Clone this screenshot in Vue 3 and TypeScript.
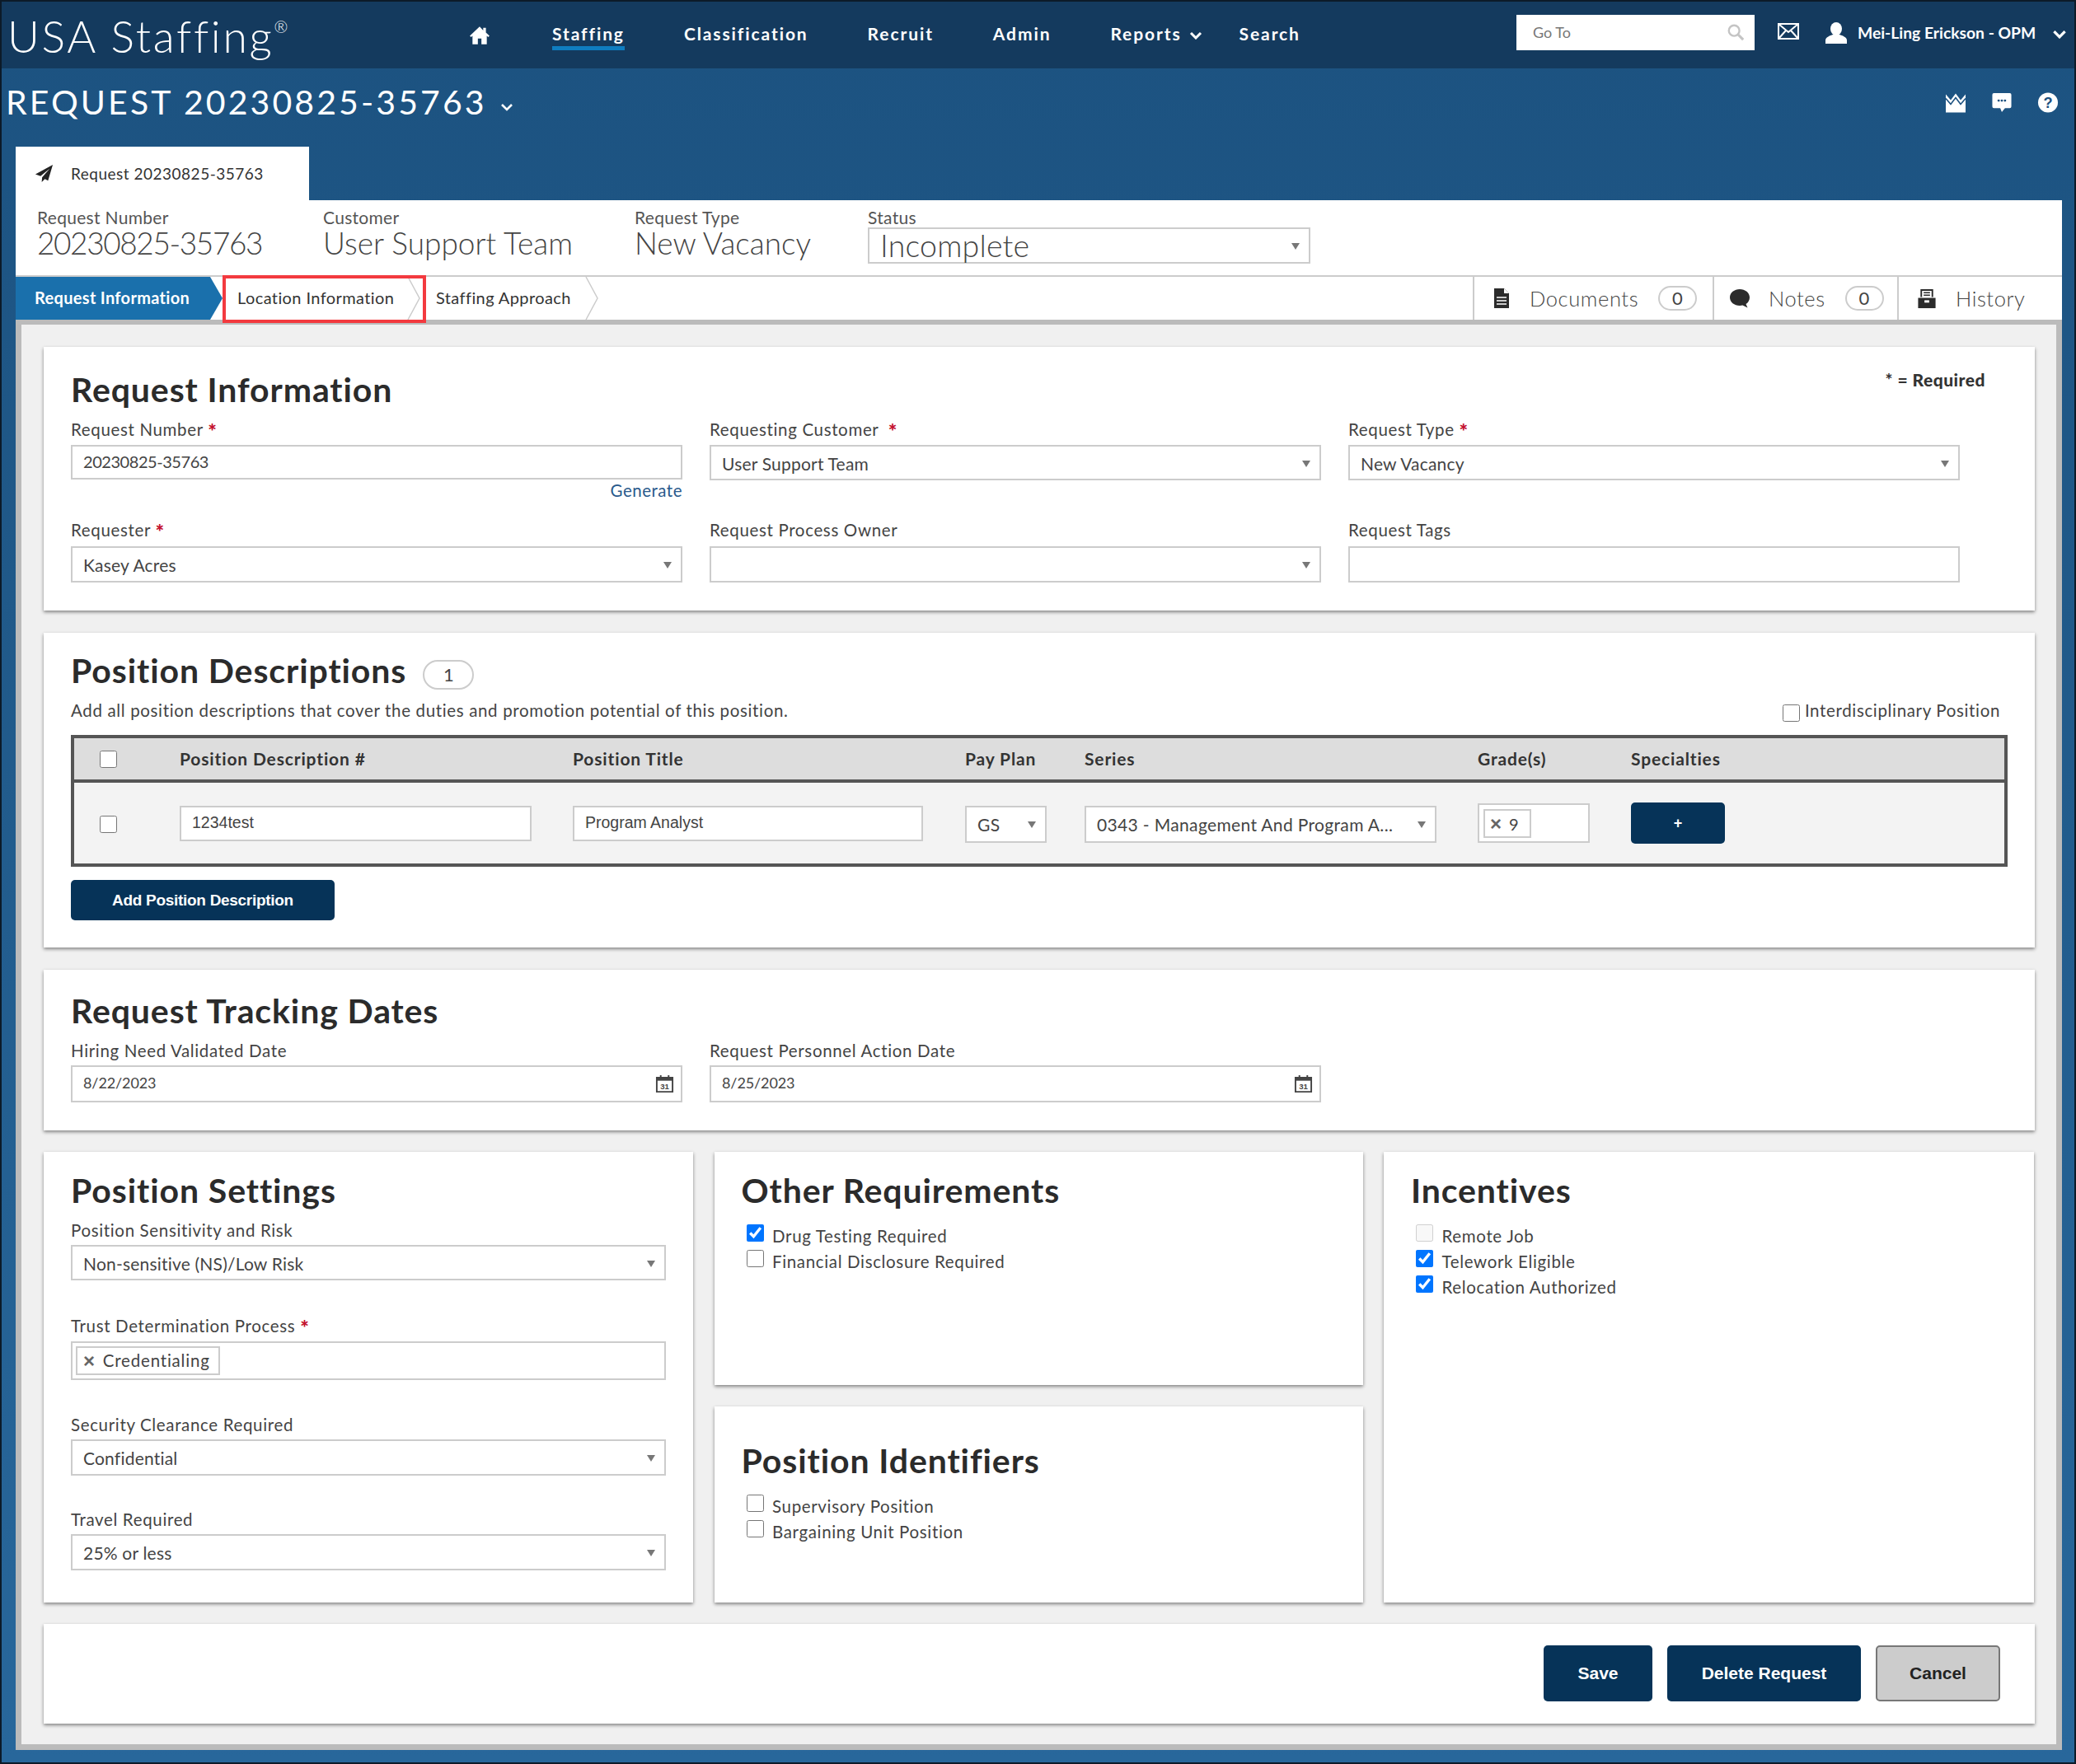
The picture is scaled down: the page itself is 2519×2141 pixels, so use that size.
<script setup lang="ts">
const navItems: string[] = ['Classification', 'Recruit', 'Admin']
interface Field { label: string; value: string; req?: boolean; wide?: boolean }
const otherReq = [
  { label: 'Drug Testing Required', checked: true },
  { label: 'Financial Disclosure Required', checked: false },
]
const identifiers = ['Supervisory Position', 'Bargaining Unit Position']
const incentives = [
  { label: 'Remote Job', checked: false, disabled: true },
  { label: 'Telework Eligible', checked: true, disabled: false },
  { label: 'Relocation Authorized', checked: true, disabled: false },
]
const trackingDates: Field[] = [
  { label: 'Hiring Need Validated Date', value: '8/22/2023' },
  { label: 'Request Personnel Action Date', value: '8/25/2023' },
]
</script>

<template>
  <div class="page">
    <header class="topbar">
      <div class="logo">USA Staffing<sup class="reg">®</sup></div>
      <nav class="nav">
        <svg class="home" viewBox="0 0 24 24"><path fill="#fff" d="M12 2 1 12.5l1.4 1.4L4 12.4V22h6v-6.5h4V22h6v-9.6l1.6 1.5 1.4-1.4-4-3.8V3.5h-3v2.9z"/></svg>
        <a class="nav-item active">Staffing</a>
        <a v-for="n in navItems" :key="n" class="nav-item">{{ n }}</a>
        <a class="nav-item">Reports
          <svg class="chev" viewBox="0 0 16 10"><path d="M2 2l6 6 6-6" fill="none" stroke="#fff" stroke-width="3"/></svg>
        </a>
        <a class="nav-item search-link">Search</a>
      </nav>
      <div class="goto">
        <span>Go To</span>
        <svg class="mag" viewBox="0 0 24 24"><circle cx="10" cy="10" r="7" fill="none" stroke="#c4c4c4" stroke-width="2.6"/><path d="M15 15l7 7" stroke="#c4c4c4" stroke-width="3.4"/></svg>
      </div>
      <svg class="mail" viewBox="0 0 26 20"><rect x="1" y="1" width="24" height="18" fill="none" stroke="#fff" stroke-width="2"/><path d="M1 1l12 10L25 1M1 19l9-10M25 19l-9-10" fill="none" stroke="#fff" stroke-width="2"/></svg>
      <svg class="user" viewBox="0 0 28 26"><ellipse cx="14" cy="8" rx="7" ry="8" fill="#fff"/><path fill="#fff" d="M1 26v-4c0-4 6-6 9-7h8c3 1 9 3 9 7v4z"/></svg>
      <span class="uname">Mei-Ling Erickson - OPM</span>
      <svg class="uchev" viewBox="0 0 16 10"><path d="M2 2l6 6 6-6" fill="none" stroke="#fff" stroke-width="3"/></svg>
    </header>

    <div class="titlebar">
      <h1 class="req-title">REQUEST 20230825-35763</h1>
      <svg class="title-chev" viewBox="0 0 16 10"><path d="M2 2l6 6 6-6" fill="none" stroke="#fff" stroke-width="2.6"/></svg>
      <div class="title-icons">
        <svg viewBox="0 0 26 24"><path fill="#fff" d="M1 2l6 7 6-8 6 8 6-7v22H1z"/><path d="M1 7l6 7 6-8 6 8 6-7" fill="none" stroke="#1c5180" stroke-width="1.6"/></svg>
        <svg viewBox="0 0 26 26"><path fill="#fff" d="M3 1h20a2 2 0 0 1 2 2v15a2 2 0 0 1-2 2h-6l-4 5-2-5H3a2 2 0 0 1-2-2V3a2 2 0 0 1 2-2z"/><circle cx="9" cy="10.5" r="1.5" fill="#1c5180"/><circle cx="13" cy="10.5" r="1.5" fill="#1c5180"/><circle cx="17" cy="10.5" r="1.5" fill="#1c5180"/></svg>
        <svg viewBox="0 0 26 26"><circle cx="13" cy="13" r="12.5" fill="#fff"/><text x="13" y="20" text-anchor="middle" font-family="Liberation Sans, sans-serif" font-weight="700" font-size="19" fill="#1c5180">?</text></svg>
      </div>
    </div>

    <main class="shell">
      <div class="tab">
        <svg class="plane" viewBox="0 0 24 24"><path fill="#222" d="M23 1 1 13l6.5 2.5L19 6 9.5 17l-.5 6 4-4 4 2z"/></svg>
        <span>Request 20230825-35763</span>
      </div>

      <section class="info-band">
        <div class="info"><div class="info-label">Request Number</div><div class="info-value digits">20230825-35763</div></div>
        <div class="info"><div class="info-label">Customer</div><div class="info-value">User Support Team</div></div>
        <div class="info"><div class="info-label">Request Type</div><div class="info-value">New Vacancy</div></div>
        <div class="info"><div class="info-label">Status</div><div class="status sel">Incomplete</div></div>
      </section>

      <section class="stepbar">
        <div class="step step-active">Request Information</div>
        <div class="step step-loc">
          <span>Location Information</span>
          <svg class="step-chev" viewBox="0 0 16 54" preserveAspectRatio="none"><path d="M1 0l14 27L1 54" fill="none" stroke="#ccc" stroke-width="1.5"/></svg>
          <div class="highlight"></div>
        </div>
        <div class="step step-app">
          <span>Staffing Approach</span>
          <svg class="step-chev" viewBox="0 0 16 54" preserveAspectRatio="none"><path d="M1 0l14 27L1 54" fill="none" stroke="#ccc" stroke-width="1.5"/></svg>
        </div>
        <div class="side-links">
          <div class="side side-doc">
            <svg viewBox="0 0 20 24"><path fill="#2b2b2b" d="M1 0h12l6 6v18H1z"/><path d="M4 11h12M4 15h12M4 19h12" stroke="#fff" stroke-width="1.6"/><path d="M13 0v6h6" fill="#fff"/></svg>
            <span class="side-text">Documents</span><span class="pill">0</span>
          </div>
          <div class="side side-notes">
            <svg viewBox="0 0 26 24"><path fill="#2b2b2b" d="M13 1c6.5 0 12 4.3 12 10 0 3.7-2 6.5-4.5 8l2 4.5-6-3c-1 .3-2.3.5-3.5.5C6.5 21 1 16.7 1 11S6.5 1 13 1z"/></svg>
            <span class="side-text">Notes</span><span class="pill">0</span>
          </div>
          <div class="side side-hist">
            <svg viewBox="0 0 24 26"><path fill="none" stroke="#2b2b2b" stroke-width="2" d="M5 11V2h14v9"/><path d="M8 5.5h8M8 8.5h8" stroke="#2b2b2b" stroke-width="1.5"/><path fill="#2b2b2b" d="M1 12h22v13H1z"/><rect x="9" y="15" width="6" height="3" fill="#fff"/></svg>
            <span class="side-text">History</span>
          </div>
        </div>
      </section>

      <div class="panel">
        <section class="card card-info">
          <div class="required-note">* = Required</div>
          <h2 class="card-title">Request Information</h2>
          <div class="three-col">
            <div class="field">
              <label>Request Number <b class="star">*</b></label>
              <div class="ctl ctl-text">20230825-35763</div>
              <a class="generate">Generate</a>
            </div>
            <div class="field">
              <label>Requesting Customer&nbsp; <b class="star">*</b></label>
              <div class="ctl sel sel-low">User Support Team</div>
            </div>
            <div class="field">
              <label>Request Type <b class="star">*</b></label>
              <div class="ctl sel sel-low">New Vacancy</div>
            </div>
            <div class="field row2">
              <label>Requester <b class="star">*</b></label>
              <div class="ctl ctl-44 sel">Kasey Acres</div>
            </div>
            <div class="field row2">
              <label>Request Process Owner</label>
              <div class="ctl ctl-44 sel"></div>
            </div>
            <div class="field row2">
              <label>Request Tags</label>
              <div class="ctl ctl-44"></div>
            </div>
          </div>
        </section>

        <section class="card card-pd">
          <div class="pd-head">
            <h2 class="card-title">Position Descriptions</h2>
            <span class="pd-count">1</span>
          </div>
          <div class="pd-sub">
            <span>Add all position descriptions that cover the duties and promotion potential of this position.</span>
            <label class="inter"><input type="checkbox" class="cb" /><span>Interdisciplinary Position</span></label>
          </div>
          <div class="pd-table">
            <div class="pd-row pd-header">
              <div><input type="checkbox" class="cb cb-table" /></div>
              <div>Position Description #</div>
              <div>Position Title</div>
              <div>Pay Plan</div>
              <div>Series</div>
              <div>Grade(s)</div>
              <div>Specialties</div>
            </div>
            <div class="pd-row pd-body">
              <div><input type="checkbox" class="cb cb-table" /></div>
              <div><div class="cell cell-pd arial">1234test</div></div>
              <div><div class="cell cell-title arial">Program Analyst</div></div>
              <div><div class="cell cell-gs sel">GS</div></div>
              <div><div class="cell cell-series sel">0343 - Management And Program A...</div></div>
              <div>
                <div class="cell-grade"><span class="tag tag-grade"><i class="x">×</i> 9</span></div>
              </div>
              <div><button class="btn btn-plus">+</button></div>
            </div>
          </div>
          <button class="btn btn-add">Add Position Description</button>
        </section>

        <section class="card card-dates">
          <h2 class="card-title">Request Tracking Dates</h2>
          <div class="three-col three-col-dates">
            <div v-for="d in trackingDates" :key="d.label" class="field field-date">
              <label>{{ d.label }}</label>
              <div class="ctl ctl-date">
                <span class="date-text">{{ d.value }}</span>
                <svg class="cal" viewBox="0 0 24 24"><path fill="none" stroke="#444" stroke-width="2" d="M2 4h20v18H2z"/><path stroke="#444" stroke-width="4" d="M2 6h20"/><path stroke="#444" stroke-width="2" d="M7 1v5M17 1v5"/><text x="12" y="19" text-anchor="middle" font-size="10" font-family="Liberation Sans, sans-serif" font-weight="700" fill="#444">31</text></svg>
              </div>
            </div>
          </div>
        </section>

        <div class="settings-grid">
          <section class="card card-settings">
            <h2 class="card-title">Position Settings</h2>
            <div class="field s1"><label>Position Sensitivity and Risk</label><div class="ctl sel s-sel-43">Non-sensitive (NS)/Low Risk</div></div>
            <div class="field s2">
              <label>Trust Determination Process <b class="star">*</b></label>
              <div class="ctl ctl-tags"><span class="tag tag-cred"><i class="x">×</i> Credentialing</span></div>
            </div>
            <div class="field s3"><label>Security Clearance Required</label><div class="ctl ctl-44 sel">Confidential</div></div>
            <div class="field s4"><label>Travel Required</label><div class="ctl ctl-44 sel">25% or less</div></div>
          </section>

          <div class="mid-col">
            <section class="card card-other">
              <h2 class="card-title">Other Requirements</h2>
              <div class="checks">
                <label v-for="c in otherReq" :key="c.label" class="check">
                  <input type="checkbox" class="cb" :checked="c.checked" /><span>{{ c.label }}</span>
                </label>
              </div>
            </section>
            <section class="card card-ident">
              <h2 class="card-title">Position Identifiers</h2>
              <div class="checks">
                <label v-for="c in identifiers" :key="c" class="check">
                  <input type="checkbox" class="cb" /><span>{{ c }}</span>
                </label>
              </div>
            </section>
          </div>

          <section class="card card-incent">
            <h2 class="card-title">Incentives</h2>
            <div class="checks">
              <label v-for="c in incentives" :key="c.label" class="check">
                <input type="checkbox" class="cb" :checked="c.checked" :disabled="c.disabled" /><span>{{ c.label }}</span>
              </label>
            </div>
          </section>
        </div>

        <section class="card card-foot">
          <button class="btn btn-save">Save</button>
          <button class="btn btn-delete">Delete Request</button>
          <button class="btn btn-cancel">Cancel</button>
        </section>
      </div>
    </main>
  </div>
</template>

<style>
html, body { margin: 0; padding: 0; background: #28669b; }
</style>

<style scoped>
* { box-sizing: border-box; }
.page {
  width: 2519px;
  height: 2141px;
  border: 2px solid #0c1a28;
  background: linear-gradient(#1c5280, #28679b);
  font-family: "Lato", "Noto Sans", sans-serif;
  color: #333;
  overflow: hidden;
}

/* top bar */
.topbar {
  height: 81px;
  background: #143a5e;
  display: flex;
  align-items: center;
  color: #fff;
}
.logo {
  margin-left: 7px;
  width: 560px;
  font-size: 53.5px;
  font-weight: 300;
  letter-spacing: 2.7px;
  line-height: 60px;
  white-space: nowrap;
}
.reg { font-size: 20px; vertical-align: 24px; line-height: 0; letter-spacing: 0; }
.nav { display: flex; align-items: center; gap: 72px; width: 1271px; margin-top: -3px; }
.home { width: 26px; height: 26px; margin-right: 3px; margin-top: 3px; }
.nav-item {
  font-size: 21px;
  font-weight: 700;
  letter-spacing: 1.9px;
  line-height: 30px;
  white-space: nowrap;
  border-bottom: 5px solid transparent;
  padding-top: 5px;
  display: flex;
  align-items: center;
  gap: 9px;
}
.nav-item.active { border-bottom-color: #0f7dc0; }
.chev { width: 16px; height: 10px; margin-top: 4px; }
.search-link { margin-left: -27px; }
.goto {
  width: 289px;
  height: 43px;
  background: #fff;
  display: flex;
  align-items: center;
  justify-content: space-between;
  padding: 0 12px 0 20px;
  color: #777;
  font-size: 18px;
  margin-top: -7px;
}
.mag { width: 22px; height: 22px; }
.mail { width: 26px; height: 20px; margin-left: 28px; margin-top: -9px; }
.user { width: 28px; height: 26px; margin-left: 31px; margin-top: -6px; }
.uname { font-size: 19.3px; font-weight: 700; margin-left: 12px; width: 236px; white-space: nowrap; margin-top: -6px; }
.uchev { width: 18px; height: 11px; margin-top: -3px; }

/* title */
.titlebar { height: 95px; display: flex; align-items: flex-start; color: #fff; position: relative; }
.req-title {
  margin: 18px 0 0 5px;
  font-size: 41px;
  font-weight: 400;
  letter-spacing: 3.1px;
  line-height: 46px;
  white-space: nowrap;
}
.title-chev { width: 16px; height: 10px; margin: 42px 0 0 16px; }
.title-icons { margin-left: auto; margin-right: 19px; margin-top: 29px; display: flex; gap: 30px; align-items: center; }
.title-icons svg { width: 26px; height: 25px; }

/* shell */
.shell { margin: 0 15px 0 17px; }
.tab {
  width: 356px;
  height: 65px;
  background: #fff;
  display: flex;
  align-items: center;
  padding-left: 23px;
  gap: 21px;
  font-size: 19px;
  letter-spacing: .5px;
  color: #333;
}
.plane { width: 23px; height: 23px; flex: none; }
.info-band {
  height: 91px;
  background: #fff;
  padding: 9px 0 0 26px;
  display: grid;
  grid-template-columns: 347px 378px 283px 537px;
}
.info-label { font-size: 21px; line-height: 24px; color: #555; letter-spacing: .3px; }
.info-value { font-size: 37px; font-weight: 300; line-height: 40px; color: #444; white-space: nowrap; margin-top: -1px; }
.digits { letter-spacing: -1.4px; }
.status {
  position: relative;
  height: 44px;
  width: 537px;
  border: 2px solid #ccc;
  font-size: 37.5px;
  font-weight: 300;
  line-height: 39px;
  padding-left: 13px;
  color: #444;
  letter-spacing: .2px;
}

/* selects */
.sel { position: relative; }
.sel::after {
  content: "";
  position: absolute;
  right: 11px;
  top: 50%;
  margin-top: -3px;
  border-left: 5px solid transparent;
  border-right: 5px solid transparent;
  border-top: 8px solid #777;
}

/* step bar */
.stepbar {
  height: 54px;
  background: #fff;
  border-top: 2px solid #ccc;
  display: flex;
  font-size: 20px;
  letter-spacing: .4px;
  color: #333;
}
.step { display: flex; align-items: center; position: relative; white-space: nowrap; padding-bottom: 2px; }
.step-active {
  width: 251px;
  padding-left: 23px;
  background: #1a70ac;
  color: #fff;
  font-weight: 700;
  letter-spacing: .32px;
  clip-path: polygon(0 0, 236px 0, 251px 50%, 236px 100%, 0 100%);
}
.step-loc { width: 247px; padding-left: 18px; }
.step-app { width: 209px; padding-left: 12px; }
.step-chev { position: absolute; top: 0; height: 52px; width: 16px; right: 7px; }
.step-app .step-chev { right: 0; }
.highlight {
  position: absolute;
  left: 0;
  right: 0;
  top: -2px;
  bottom: -4px;
  border: 4px solid #f33a3f;
  z-index: 2;
}
.side-links { margin-left: auto; display: flex; }
.side {
  border-left: 2px solid #ccc;
  display: flex;
  align-items: center;
  font-size: 25.5px;
  font-weight: 300;
  color: #444;
  letter-spacing: .6px;
}
.side svg { flex: none; }
.side-doc { width: 291px; padding-left: 23px; }
.side-doc svg { width: 20px; height: 24px; margin-right: 24px; }
.side-notes { width: 224px; padding-left: 18px; }
.side-notes svg { width: 26px; height: 24px; margin-right: 22px; }
.side-hist { width: 200px; padding-left: 22px; }
.side-hist svg { width: 24px; height: 25px; margin-right: 23px; }
.pill {
  width: 47px;
  height: 30px;
  border: 2px solid #ccc;
  border-radius: 15px;
  text-align: center;
  font-size: 22px;
  font-weight: 400;
  line-height: 26px;
  margin-left: 24px;
}

/* panel */
.panel {
  height: 1736px;
  background: #f0f0f0;
  border: 7px solid #bbb;
  border-top-width: 6px;
  padding: 27px 26px 25px 27px;
  display: flex;
  flex-direction: column;
  gap: 27px;
}
.panel > * { flex: none; }
.card {
  background: #fff;
  box-shadow: 0 2px 4px rgba(0,0,0,.45);
  position: relative;
  padding: 0 33px;
}
.card-title {
  margin: 0;
  font-size: 41px;
  font-weight: 700;
  letter-spacing: .9px;
  line-height: 44px;
  color: #2b2b2b;
  white-space: nowrap;
}
.three-col {
  display: grid;
  grid-template-columns: 742px 742px 742px;
  column-gap: 33px;
  row-gap: 23px;
}
.field { display: flex; flex-direction: column; }
.field label {
  font-size: 20.5px;
  line-height: 26px;
  color: #444;
  letter-spacing: .65px;
  white-space: nowrap;
}
.row2 label { position: relative; top: -1px; }
.star { color: #c4122f; font-weight: 900; font-size: 25px; line-height: 0; vertical-align: -4px; }
.ctl {
  margin-top: 6px;
  height: 42px;
  background: #fff;
  border: 2px solid #ccc;
  padding-left: 13px;
  font-size: 21px;
  line-height: 36px;
  letter-spacing: .2px;
  color: #444;
}
.ctl-text { font-size: 20px; letter-spacing: -.45px; }
.sel-low { height: 43px; line-height: 42px; }
.ctl-44 { height: 44px; line-height: 42px; }
.generate { align-self: flex-end; font-size: 20.5px; line-height: 25px; color: #2a5a8c; letter-spacing: .5px; margin-top: 1px; }

.card-info { height: 320px; padding-top: 30px; }
.card-info .three-col { margin-top: 13px; }
.required-note { position: absolute; right: 60px; top: 27px; font-size: 21px; font-weight: 900; letter-spacing: .5px; line-height: 26px; color: #333; }

/* position descriptions */
.card-pd { height: 382px; padding-top: 24px; }
.pd-head { display: flex; align-items: center; }
.pd-head .card-title { margin-top: -2px; }
.pd-count {
  width: 62px; height: 36px;
  margin-left: 20px;
  margin-top: 9px;
  border: 2px solid #ccc;
  border-radius: 18px;
  text-align: center;
  font-size: 22px;
  line-height: 32px;
  color: #444;
}
.pd-sub {
  display: flex;
  justify-content: space-between;
  margin-top: 12px;
  font-size: 20.5px;
  line-height: 26px;
  letter-spacing: .65px;
  color: #444;
  white-space: nowrap;
}
.inter { display: flex; align-items: flex-start; gap: 6px; margin-right: 9px; }
.inter .cb { margin-top: 6px; }
.cb {
  width: 21px;
  height: 21px;
  margin: 0;
  flex: none;
  accent-color: #0075ff;
}
.pd-table {
  margin-top: 16px;
  border: 4px solid #555;
  height: 160px;
  background: #f3f3f3;
}
.pd-row {
  display: grid;
  grid-template-columns: 128px 477px 476px 145px 477px 186px 1fr;
  align-items: center;
}
.pd-header {
  height: 54px;
  padding-bottom: 2px;
  background: #ddd;
  border-bottom: 4px solid #555;
  font-size: 21px;
  font-weight: 700;
  letter-spacing: .85px;
  color: #333;
}
.pd-body { height: 98px; color: #444; font-size: 21px; }
.cb-table { margin-left: 31px; display: block; }
.pd-header .cb-table { margin-top: 3px; }
.pd-body .cb-table { margin-top: 2px; }
.cell {
  height: 43px;
  background: #fff;
  border: 2px solid #ccc;
  padding-left: 13px;
  line-height: 37px;
  white-space: nowrap;
  letter-spacing: .35px;
}
.arial { font-family: "Liberation Sans", Arial, sans-serif; font-size: 19.5px; letter-spacing: 0; }
.cell-pd { width: 427px; }
.cell-title { width: 425px; }
.cell-gs { width: 99px; margin-top: 2px; line-height: 41px; }
.cell-series { width: 427px; margin-top: 2px; line-height: 41px; }
.cell-gs, .cell-series { height: 45px; }
.cell-grade {
  width: 136px;
  height: 48px;
  background: #fff;
  border: 2px solid #ccc;
  padding: 5px;
}
.tag {
  display: inline-flex;
  align-items: center;
  border: 2px solid #ccc;
  background: #fff;
}
.x { font-family: "Liberation Sans", Arial, sans-serif; font-style: normal; font-weight: 700; color: #666; margin-right: 9px; font-size: 24px; line-height: 1; }
.tag-grade { width: 58px; height: 35px; padding-left: 6px; font-size: 20px; }
.btn {
  border: 0;
  border-radius: 5px;
  background: #063358;
  color: #fff;
  font-family: "Liberation Sans", Arial, sans-serif;
  font-weight: 700;
  font-size: 20px;
  padding: 0;
  display: block;
}
.btn-plus { width: 114px; height: 50px; font-size: 18px; }
.btn-add { width: 320px; height: 49px; margin-top: 16px; font-size: 19px; letter-spacing: -.3px; }

/* dates */
.card-dates { height: 195px; padding-top: 28px; }
.three-col-dates { margin-top: 13px; }
.field-date .ctl-date {
  margin-top: 5px;
  height: 45px;
  display: flex;
  align-items: center;
  justify-content: space-between;
  padding-right: 8px;
  font-size: 18px;
  letter-spacing: -.1px;
}
.date-text { margin-top: -3px; }
.cal { width: 23px; height: 23px; }

/* settings grid */
.settings-grid {
  display: grid;
  grid-template-columns: 788px 787px 789px;
  column-gap: 25.5px;
  height: 547px;
  margin-top: -1px;
}
.card-settings { padding: 25px 33px 0; }
.s1 { margin-top: 13px; }
.s2 { margin-top: 42px; }
.s3 { margin-top: 41px; }
.s4 { margin-top: 40px; }
.field .ctl { white-space: nowrap; }
.s1 .ctl { margin-top: 5px; height: 43px; line-height: 41px; }
.s3 .ctl, .s4 .ctl { margin-top: 5px; }
.ctl-tags { height: 47px; padding: 4px; line-height: 1; }
.tag-cred { width: 175px; height: 35px; padding-left: 7px; font-size: 20.5px; letter-spacing: .8px; }

.mid-col { display: flex; flex-direction: column; gap: 26px; }
.card-other { height: 283px; padding-top: 25px; }
.card-ident { height: 238px; padding-top: 44px; }
.card-incent { padding-top: 25px; }
.checks { margin-top: 18px; padding-left: 6px; }
.check {
  display: flex;
  align-items: flex-start;
  height: 31px;
  gap: 10.5px;
  font-size: 20.5px;
  line-height: 31px;
  letter-spacing: .65px;
  color: #444;
}
.check .cb { margin-top: 1px; }

/* footer */
.card-foot {
  height: 121px;
  margin-top: -1px;
  display: flex;
  justify-content: flex-end;
  gap: 18px;
  padding: 26px 42px 0 0;
}
.card-foot .btn { height: 68px; font-size: 21px; }
.btn-save { width: 132px; }
.btn-delete { width: 235px; }
.btn-cancel { width: 151px; background: #ccc; color: #222; border: 2px solid #777; }
</style>
